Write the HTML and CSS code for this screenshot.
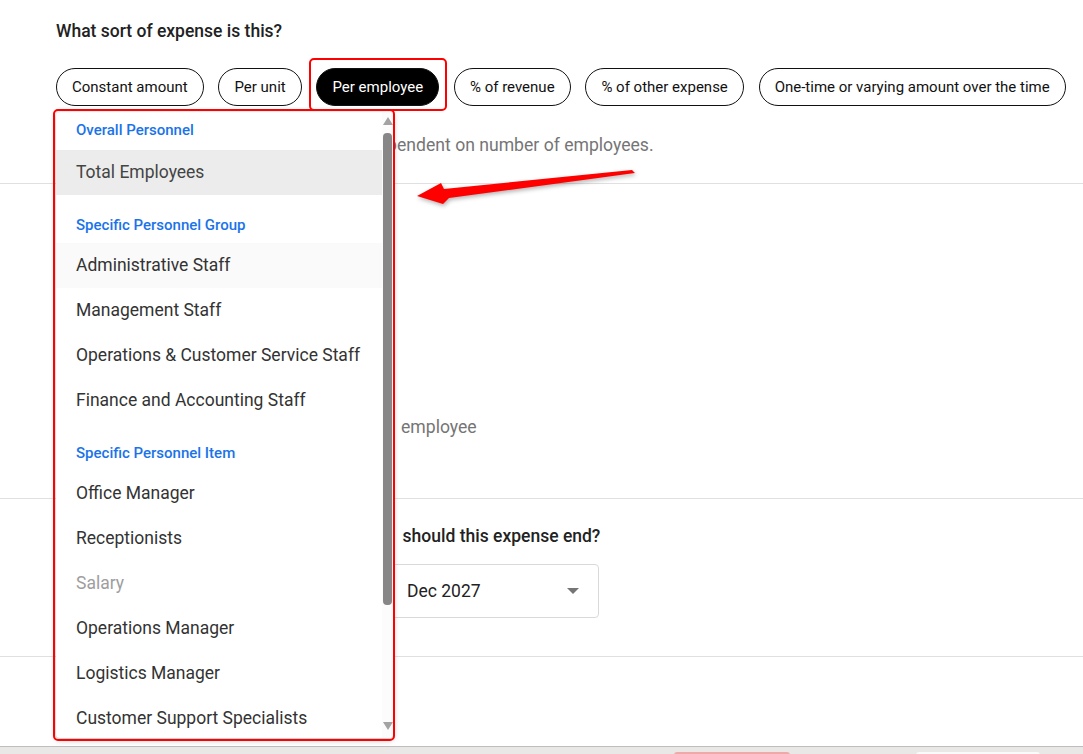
FILE: index.html
```html
<!DOCTYPE html>
<html lang="en">
<head>
    <meta charset="UTF-8">
    <title>Expense</title>
    <link rel="stylesheet" href="styles.css">
</head>
<body>
<div class="page">
    <section class="section section--type">
        <h3 class="question">What sort of expense is this?</h3>
        <div class="chips">
            <button class="chip">Constant amount</button>
            <button class="chip">Per unit</button>
            <button class="chip chip--active">Per employee</button>
            <button class="chip">% of revenue</button>
            <button class="chip">% of other expense</button>
            <button class="chip">One-time or varying amount over the time</button>
        </div>
        <p class="hint">Use this option if an expense amount is dependent on number of employees.</p>
    </section>

    <section class="section section--amount">
        <h3 class="question">Which employees does this apply to?</h3>
        <div class="field field--wide">Total Employees</div>
        <h3 class="question question--spaced">How much per employee?</h3>
        <div class="amount-row">
            <div class="field field--amount">$0 <span class="suffix">per</span></div>
            <span class="hint hint--inline">employee</span>
        </div>
    </section>

    <section class="section section--dates">
        <div class="date-col">
            <h3 class="question">When should this expense start?</h3>
            <div class="field field--select">Jan 2025 <span class="caret"></span></div>
        </div>
        <div class="date-col date-col--end">
            <h3 class="question"><span class="q-lead">When</span> should this expense end?</h3>
            <div class="field field--select field--end">Dec 2027 <span class="caret"></span></div>
        </div>
    </section>

    <section class="section section--last"></section>

    <div class="browser-bar">
        <span class="bar-btn bar-btn--pink"></span>
        <span class="bar-btn bar-btn--white"></span>
    </div>

    <!-- opened dropdown -->
    <div class="dropdown">
        <ul class="dropdown__list">
            <li class="group group--first">Overall Personnel</li>
            <li class="option option--selected">Total Employees</li>
            <li class="group">Specific Personnel Group</li>
            <li class="option option--hover">Administrative Staff</li>
            <li class="option">Management Staff</li>
            <li class="option">Operations &amp; Customer Service Staff</li>
            <li class="option">Finance and Accounting Staff</li>
            <li class="group">Specific Personnel Item</li>
            <li class="option">Office Manager</li>
            <li class="option">Receptionists</li>
            <li class="option option--disabled">Salary</li>
            <li class="option">Operations Manager</li>
            <li class="option">Logistics Manager</li>
            <li class="option">Customer Support Specialists</li>
        </ul>
        <div class="scrollbar">
            <span class="scrollbar__up"></span>
            <div class="scrollbar__track"><span class="scrollbar__thumb"></span></div>
            <span class="scrollbar__down"></span>
        </div>
    </div>

    <!-- annotations -->
    <span class="mark mark--chip"></span>
    <span class="mark mark--dropdown"></span>
    <svg class="arrow" viewBox="0 0 1083 754" width="1083" height="754">
        <polygon points="417,196 441,183 444,189 632,170 635,173 449,198 443,204" fill="#ff0000"/>
    </svg>
</div>
</body>
</html>
```

FILE: styles.css
```css
* {
    box-sizing: border-box;
}

body {
    margin: 0;
    background: #fff;
    font-family: Roboto, "Liberation Sans", Arial, sans-serif;
    color: #222;
    overflow: hidden;
}

.page {
    position: relative;
    width: 1083px;
    height: 754px;
    overflow: hidden;
}

.section {
    padding-left: 56px;
    border-bottom: 1px solid #e0e0e0;
}

.question {
    margin: 0;
    font-size: 17.5px;
    line-height: 24px;
    font-weight: 500;
    color: #222;
}

/* expense type */
.section--type {
    height: 184px;
    padding-top: 19px;
}

.chips {
    display: flex;
    gap: 14.8px;
    margin-top: 25px;
}

.chip {
    height: 38px;
    padding: 0 15px;
    border: 1px solid #111;
    border-radius: 19px;
    background: #fff;
    font-family: inherit;
    font-size: 15px;
    color: #111;
}

.chip--active {
    background: #000;
    color: #fff;
}

.hint {
    margin: 27px 0 0;
    font-size: 17.6px;
    line-height: 24px;
    color: #757575;
}

/* amount */
.section--amount {
    height: 315px;
    padding-top: 32px;
}

.question--spaced {
    margin-top: 62px;
}

.field {
    display: flex;
    align-items: center;
    height: 54px;
    padding: 0 15px;
    border: 1px solid #d9d9d9;
    border-radius: 4px;
    font-size: 17.5px;
    color: #222;
}

.field--wide {
    width: 320px;
    margin-top: 10px;
}

.amount-row {
    display: flex;
    align-items: center;
    gap: 12px;
    margin-top: 10px;
}

.field--amount {
    justify-content: space-between;
    width: 333px;
}

.suffix {
    color: #757575;
}

.hint--inline {
    margin: 0;
}

/* dates */
.section--dates {
    display: flex;
    height: 158px;
    padding-top: 25px;
}

.date-col {
    width: 292px;
}

.q-lead {
    margin-right: 6px;
}

.field--select {
    justify-content: space-between;
    width: 208px;
    margin-top: 16px;
}

.field--end {
    margin-left: 43px;
}

.caret {
    width: 0;
    height: 0;
    border-left: 6px solid transparent;
    border-right: 6px solid transparent;
    border-top: 6px solid #757575;
    margin-right: 4px;
}

.section--last {
    height: 89px;
    border-bottom: none;
}

.browser-bar {
    display: flex;
    height: 8px;
    padding-top: 5px;
    border-top: 1px solid #bdbdbd;
    background: #e9e8e6;
}

.bar-btn {
    height: 3px;
    border-radius: 3px 3px 0 0;
}

.bar-btn--pink {
    width: 116px;
    margin-left: 674px;
    background: #f0a8a8;
}

.bar-btn--white {
    width: 124px;
    margin-left: 126px;
    background: #fafafa;
}

/* dropdown */
.dropdown {
    position: absolute;
    left: 56px;
    top: 112px;
    width: 337px;
    height: 626px;
    display: flex;
    background: #fff;
    border-radius: 4px;
    box-shadow: 0 2px 6px rgba(0, 0, 0, 0.25), 0 0 2px rgba(0, 0, 0, 0.1);
    overflow: hidden;
}

.dropdown__list {
    flex: 1;
    margin: 0;
    padding: 0;
    list-style: none;
}

.group {
    height: 48px;
    padding: 12px 20px 0;
    line-height: 36px;
    font-size: 15px;
    font-weight: 500;
    color: #1a73e8;
}

.group--first {
    height: 38px;
    padding-top: 0;
}

.option {
    height: 45px;
    padding: 0 20px;
    line-height: 45px;
    font-size: 17.5px;
    color: #333;
    white-space: nowrap;
}

.option--selected {
    background: #ececec;
    color: #444;
}

.option--hover {
    background: #fafafa;
}

.option--disabled {
    color: #9e9e9e;
}

.scrollbar {
    display: flex;
    flex-direction: column;
    align-items: center;
    width: 11px;
    padding: 5px 0 8px;
    background: #fcfcfc;
}

.scrollbar__up,
.scrollbar__down {
    width: 0;
    height: 0;
    border-left: 5px solid transparent;
    border-right: 5px solid transparent;
}

.scrollbar__up {
    border-bottom: 8px solid #a3a3a3;
}

.scrollbar__down {
    border-top: 8px solid #a3a3a3;
}

.scrollbar__track {
    flex: 1;
    width: 100%;
    padding: 8px 1px 0;
}

.scrollbar__thumb {
    display: block;
    width: 100%;
    height: 472px;
    border-radius: 4px;
    background: #878787;
}

/* annotations */
.mark {
    position: absolute;
    border: 2px solid #f00;
    border-radius: 5px;
}

.mark--chip {
    left: 309px;
    top: 58px;
    width: 138px;
    height: 53px;
}

.mark--dropdown {
    left: 53px;
    top: 109px;
    width: 342px;
    height: 632px;
}

.arrow {
    position: absolute;
    left: 0;
    top: 0;
    pointer-events: none;
    filter: drop-shadow(1px 2px 2px rgba(0, 0, 0, 0.3));
}
```
